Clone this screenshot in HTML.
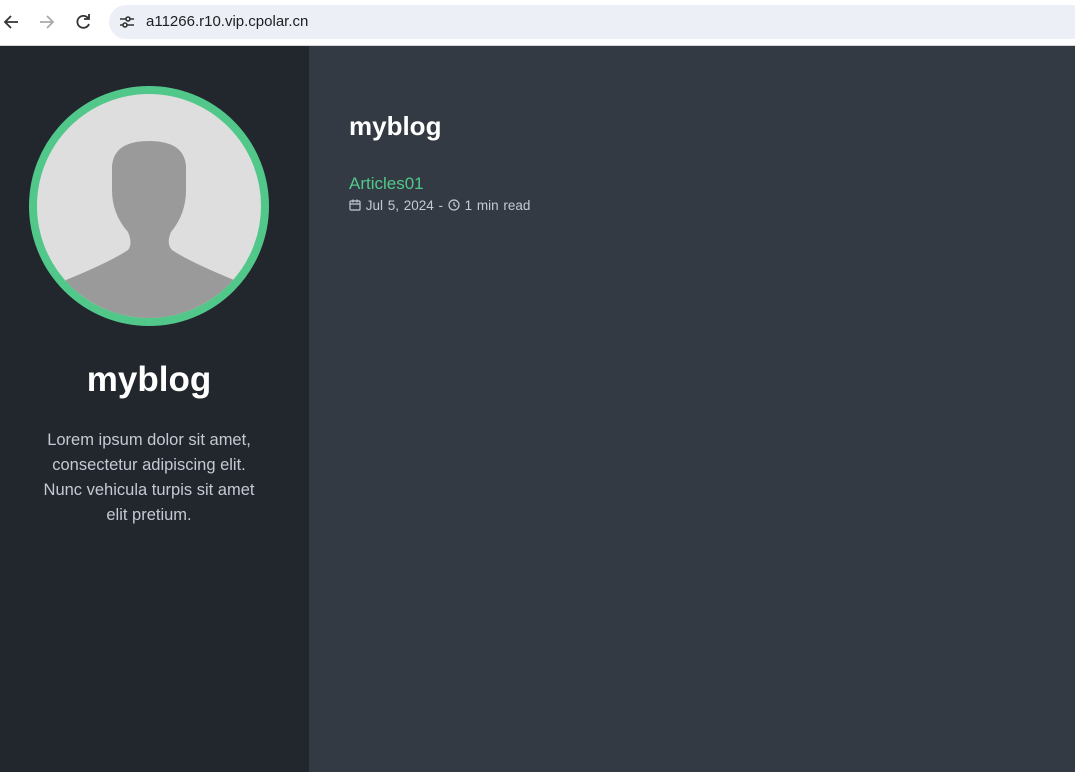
<!DOCTYPE html>
<html><head><meta charset="utf-8"><style>
body{margin:0;width:1075px;height:772px;overflow:hidden;font-family:"Liberation Sans",sans-serif;background:#343a43;}
.bar{position:absolute;left:0;top:0;width:1075px;height:45px;background:#fff;border-bottom:1px solid #d6d6d6;}
.url{position:absolute;left:109px;top:5px;width:980px;height:34px;border-radius:17px;background:#edeff7;}
.url span{position:absolute;left:37px;top:8px;font-size:15px;color:#202124;}
.side{position:absolute;left:0;top:46px;width:309px;height:726px;background:#22262d;}
.av{position:absolute;left:29px;top:86px;width:224px;height:224px;border:8px solid #51c88a;border-radius:50%;background:#dedede;overflow:hidden;}
h1{position:absolute;margin:0;color:#fff;font-weight:bold;}
.desc{position:absolute;left:32px;top:428px;width:234px;text-align:center;color:#c3cad3;font-size:16.5px;line-height:25px;}
</style></head><body>
<div class="bar">
<svg style="position:absolute;left:0;top:0" width="110" height="45" fill="none" stroke-width="1.8">
<path d="M18 22H6M11 16l-6 6 6 6" stroke="#333"/>
<path d="M40 22h12M47 16l6 6-6 6" stroke="#aaa"/>
<path d="M88 18a6 6 0 1 0 1 6M89 14v5h-5" stroke="#333"/>
</svg>
<div class="url">
<svg style="position:absolute;left:10px;top:9px" width="16" height="16" fill="none" stroke="#333" stroke-width="1.6"><path d="M1 5h6M11 5h4M1 11h3M8 11h7"/><circle cx="9" cy="5" r="2"/><circle cx="6" cy="11" r="2"/></svg>
<span>a11266.r10.vip.cpolar.cn</span></div>
</div>
<div class="side"></div>
<div class="av"><svg width="224" height="224" viewBox="37 94 224 224">
<path d="M66 280 Q110 262 128 250 Q133 244 128 232 Q112 214 112 190 L112 166 Q114 141 149 141 Q184 141 186 166 L186 190 Q186 214 171 232 Q166 244 172 250 Q190 262 234 280 L240 330 L60 330 Z" fill="#9a9a9a"/></svg></div>
<h1 style="left:0;width:298px;text-align:center;top:360px;font-size:35px">myblog</h1>
<div class="desc">Lorem ipsum dolor sit amet, consectetur adipiscing elit. Nunc vehicula turpis sit amet elit pretium.</div>
<h1 style="left:349px;top:111px;font-size:26px">myblog</h1>
<div style="position:absolute;left:349px;top:174px;color:#51c88a;font-size:17px">Articles01</div>
<div style="position:absolute;left:349px;top:198px;color:#c3cad3;font-size:13.5px;word-spacing:1px">
<svg width="12" height="12" fill="none" stroke="#c3cad3" stroke-width="1.2" style="vertical-align:-1px"><rect x="1" y="2" width="10" height="9" rx="1"/><path d="M1 5h10M4 0.5v3M8 0.5v3"/></svg>&nbsp;Jul 5, 2024 -&nbsp;<svg width="12" height="12" fill="none" stroke="#c3cad3" stroke-width="1.2" style="vertical-align:-1px"><circle cx="6" cy="6" r="5"/><path d="M6 3v3l2 1.5"/></svg>&nbsp;1 min read</div>
</body></html>
